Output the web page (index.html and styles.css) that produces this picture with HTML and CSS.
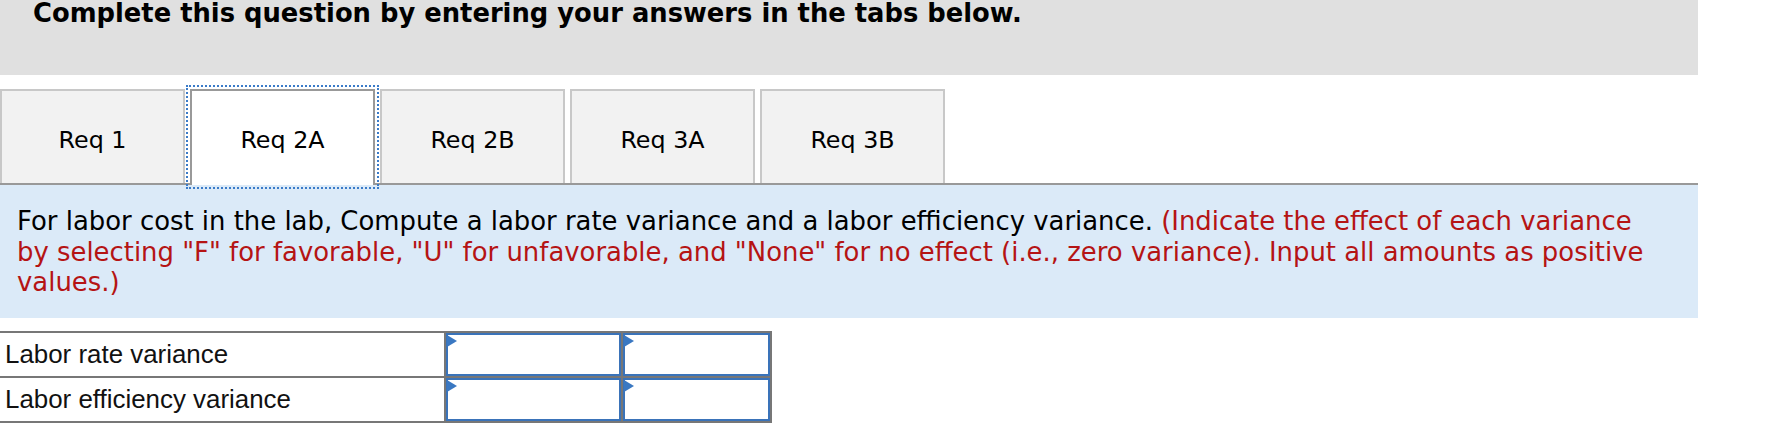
FILE: index.html
```html
<!DOCTYPE html>
<html>
<head>
<meta charset="utf-8">
<link rel="stylesheet" href="styles.css">
</head>
<body>
<div class="header">
  <h1 class="header-title">Complete this question by entering your answers in the tabs below.</h1>
</div>
<div class="tabs">
  <div class="tab">Req 1</div>
  <div class="tab tab-active">Req 2A</div>
  <div class="tab">Req 2B</div>
  <div class="tab">Req 3A</div>
  <div class="tab">Req 3B</div>
</div>
<div class="panel">
  <p class="instructions">For labor cost in the lab, Compute a labor rate variance and a labor efficiency variance. <span class="hint">(Indicate the effect of each variance by selecting "F" for favorable, "U" for unfavorable, and "None" for no effect (i.e., zero variance). Input all amounts as positive values.)</span></p>
</div>
<div class="answer-table">
  <div class="cell label">Labor rate variance</div>
  <div class="cell input"><span class="flag"></span></div>
  <div class="cell input"><span class="flag"></span></div>
  <div class="cell label">Labor efficiency variance</div>
  <div class="cell input"><span class="flag"></span></div>
  <div class="cell input"><span class="flag"></span></div>
</div>
</body>
</html>
```

FILE: styles.css
```css
html, body {
  margin: 0;
  padding: 0;
  background: #ffffff;
}

body {
  font-family: "DejaVu Sans", Verdana, sans-serif;
  color: #000;
}

.header {
  width: 1698px;
  height: 75px;
  background: #e0e0e0;
  box-sizing: border-box;
  padding-left: 33px;
}

.header-title {
  margin: 0;
  font-size: 25.8px;
  line-height: 26px;
  font-weight: bold;
  white-space: nowrap;
}

.tabs {
  width: 1698px;
  margin-top: 14px;
  display: flex;
  gap: 5px;
  border-bottom: 2px solid #999999;
  height: 94px;
  box-sizing: content-box;
}

.tab {
  width: 185px;
  height: 94px;
  box-sizing: border-box;
  background: #f2f2f2;
  border: 2px solid #c8c8c8;
  border-bottom: none;
  display: flex;
  align-items: center;
  justify-content: center;
  font-size: 23.8px;
  padding-top: 6px;
}

.tab-active {
  background: #ffffff;
  border-color: #999999;
  height: 96px;
  margin-bottom: -2px;
  padding-bottom: 2px;
  outline: 2px dotted #3b7bc8;
  outline-offset: 2px;
  position: relative;
  z-index: 1;
}

.panel {
  width: 1698px;
  height: 133px;
  background: #dbeaf8;
  box-sizing: border-box;
  padding: 21px 17px 0 17px;
}

.instructions {
  margin: 0;
  width: 1640px;
  font-size: 25.9px;
  line-height: 30.5px;
}

.hint {
  color: #b51414;
}

.answer-table {
  margin-top: 13px;
  display: grid;
  grid-template-columns: 444px 175px 147px;
  grid-auto-rows: 43px;
  gap: 2px;
  background: #777777;
  padding: 2px 2px 2px 0;
  width: max-content;
}

.cell {
  background: #ffffff;
}

.label {
  font-family: "Liberation Sans", Arial, sans-serif;
  font-size: 25.9px;
  display: flex;
  align-items: center;
  padding-left: 5px;
  color: #111;
}

.input {
  border: 2px solid #3a73b9;
  position: relative;
}

.flag {
  position: absolute;
  left: -1px;
  top: 0;
  width: 0;
  height: 0;
  border-top: 6px solid transparent;
  border-bottom: 6px solid transparent;
  border-left: 10px solid #3a78c2;
}
```
